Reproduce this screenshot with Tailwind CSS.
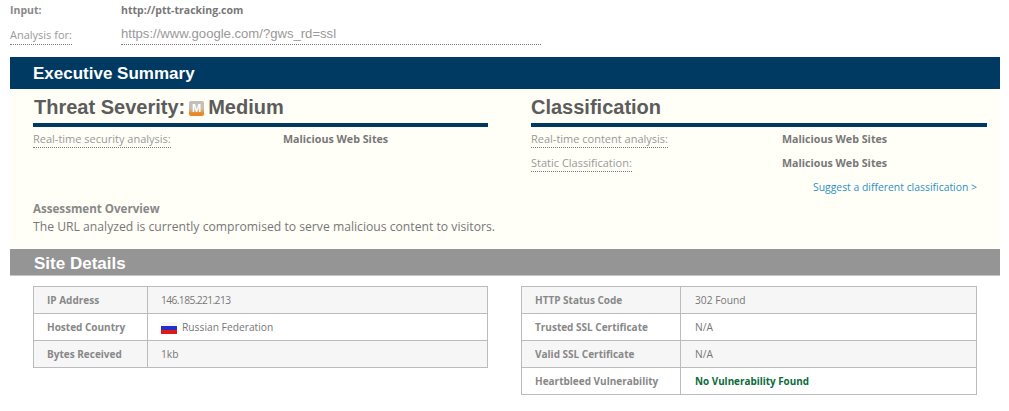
<!DOCTYPE html>
<html>
<head>
<meta charset="utf-8">
<script src="https://cdn.jsdelivr.net/npm/@tailwindcss/browser@4"></script>
</head>
<body class="bg-white h-[411px] overflow-hidden font-['Open_Sans',sans-serif] text-[11px] text-[#777]">
<div class="pl-[10px] w-[1000px]">
  <div class="flex h-[21px] items-center font-bold text-[#888]">
    <div class="w-[111px] text-[10.5px]">Input:</div>
    <div class="text-[#777] text-[10.5px]">http://ptt-tracking.com</div>
  </div>
  <div class="flex h-[36px] pt-[3px]">
    <div class="w-[111px] h-[22px]"><span class="inline-block leading-[19px] pt-[1px] border-b border-dotted border-[#777] text-[#999] text-[11px]">Analysis for:</span></div>
    <div class="w-[420px] h-[21px] border-b border-dotted border-[#777] font-['Liberation_Sans',sans-serif] text-[13.1px] leading-[20px] text-[#999]">https://www.google.com/?gws_rd=ssl</div>
  </div>
  <div class="h-[32px] bg-[#003a63] pl-[23px] font-['Liberation_Sans',sans-serif] font-bold text-[17px] leading-[33px] text-white">Executive Summary</div>
  <div class="h-[159px] bg-[#fffff7] pl-[23px] pr-[13px]">
    <div class="flex">
      <div class="w-[455px]">
        <div class="h-[38px] pt-[2px] border-b-[4px] border-[#003a63] flex items-center gap-[4px] pl-[1px] font-['Liberation_Sans',sans-serif] font-bold text-[20px] text-[#5c5c5c] leading-[32px]">
          <span>Threat Severity:</span>
          <span class="w-[15px] h-[15px] mt-[2px] rounded-[2px] bg-gradient-to-b from-[#c4c0b8] from-50% to-[#e58a24] to-80% flex items-center justify-center font-['Liberation_Sans',sans-serif] text-[11px] leading-none text-white">M</span>
          <span>Medium</span>
        </div>
        <div class="flex h-[24px] items-start pt-[3px]">
          <div class="w-[250px]"><span class="inline-block leading-[17px] border-b border-dotted border-[#777] text-[#999] text-[11px]">Real-time security analysis:</span></div>
          <div class="font-bold text-[#777] text-[10.7px] leading-[19px]">Malicious Web Sites</div>
        </div>
      </div>
      <div class="w-[456px] ml-[43px]">
        <div class="h-[38px] pt-[2px] border-b-[4px] border-[#003a63] font-['Liberation_Sans',sans-serif] font-bold text-[20px] text-[#5c5c5c] leading-[32px] flex items-center">Classification</div>
        <div class="flex h-[24px] items-start pt-[3px]">
          <div class="w-[251px]"><span class="inline-block leading-[17px] border-b border-dotted border-[#777] text-[#999] text-[11px]">Real-time content analysis:</span></div>
          <div class="font-bold text-[#777] text-[10.7px] leading-[19px]">Malicious Web Sites</div>
        </div>
        <div class="flex h-[24px] items-start pt-[3px]">
          <div class="w-[251px]"><span class="inline-block leading-[17px] border-b border-dotted border-[#777] text-[#999] text-[11px]">Static Classification:</span></div>
          <div class="font-bold text-[#777] text-[10.7px] leading-[19px]">Malicious Web Sites</div>
        </div>
        <div class="h-[24px] pr-[10px] text-right text-[10.4px] leading-[20px] pt-[2px] text-[#2e90c8]">Suggest a different classification &gt;</div>
      </div>
    </div>
    <div class="mt-[1px] font-bold text-[#888] text-[11.6px] leading-[18px]">Assessment Overview</div>
    <div class="text-[#777] text-[12.18px] leading-[18px]">The URL analyzed is currently compromised to serve malicious content to visitors.</div>
  </div>
  <div class="mt-[1px] h-[27px] bg-[#959595] border-b border-[#c4c4c4] pl-[24px] font-['Liberation_Sans',sans-serif] font-bold text-[17px] leading-[29px] text-white">Site Details</div>
  <div class="flex items-start pt-[10px] pl-[23px]">
    <table class="w-[455px] table-fixed border-collapse border border-[#bbb] text-[10.25px]">
      <colgroup><col class="w-[114px]"><col></colgroup>
      <tr class="h-[27px] bg-[#f6f6f6]"><td class="border border-[#bbb] pl-[13px] font-bold text-[10px] text-[#888]">IP Address</td><td class="border border-[#bbb] pl-[13px] pt-[2px] tracking-[-0.6px]">146.185.221.213</td></tr>
      <tr class="h-[27px] bg-white"><td class="border border-[#bbb] pl-[13px] font-bold text-[10px] text-[#888]">Hosted Country</td><td class="border border-[#bbb] pl-[13px] pt-[2px]"><div class="flex items-center gap-[5px]"><span class="w-[16px] h-[12px] bg-[linear-gradient(to_bottom,#f4f4f4_0%,#f4f4f4_33%,#2030c8_33%,#2030c8_66%,#e01818_66%,#e01818_100%)]"></span><span>Russian Federation</span></div></td></tr>
      <tr class="h-[27px] bg-[#f6f6f6]"><td class="border border-[#bbb] pl-[13px] font-bold text-[10px] text-[#888]">Bytes Received</td><td class="border border-[#bbb] pl-[13px] pt-[2px]">1kb</td></tr>
    </table>
    <table class="w-[456px] ml-[33px] table-fixed border-collapse border border-[#bbb] text-[10.25px]">
      <colgroup><col class="w-[159px]"><col></colgroup>
      <tr class="h-[27px] bg-[#f6f6f6]"><td class="border border-[#bbb] pl-[13px] font-bold text-[10px] text-[#888]">HTTP Status Code</td><td class="border border-[#bbb] pl-[14px] pt-[2px]">302 Found</td></tr>
      <tr class="h-[27px] bg-white"><td class="border border-[#bbb] pl-[13px] font-bold text-[10px] text-[#888]">Trusted SSL Certificate</td><td class="border border-[#bbb] pl-[14px] pt-[2px]">N/A</td></tr>
      <tr class="h-[27px] bg-[#f6f6f6]"><td class="border border-[#bbb] pl-[13px] font-bold text-[10px] text-[#888]">Valid SSL Certificate</td><td class="border border-[#bbb] pl-[14px] pt-[2px]">N/A</td></tr>
      <tr class="h-[27px] bg-white"><td class="border border-[#bbb] pl-[13px] font-bold text-[10px] text-[#888]">Heartbleed Vulnerability</td><td class="border border-[#bbb] pl-[14px] font-bold text-[9.9px] text-[#0a6b3a]">No Vulnerability Found</td></tr>
    </table>
  </div>
</div>
</body>
</html>
